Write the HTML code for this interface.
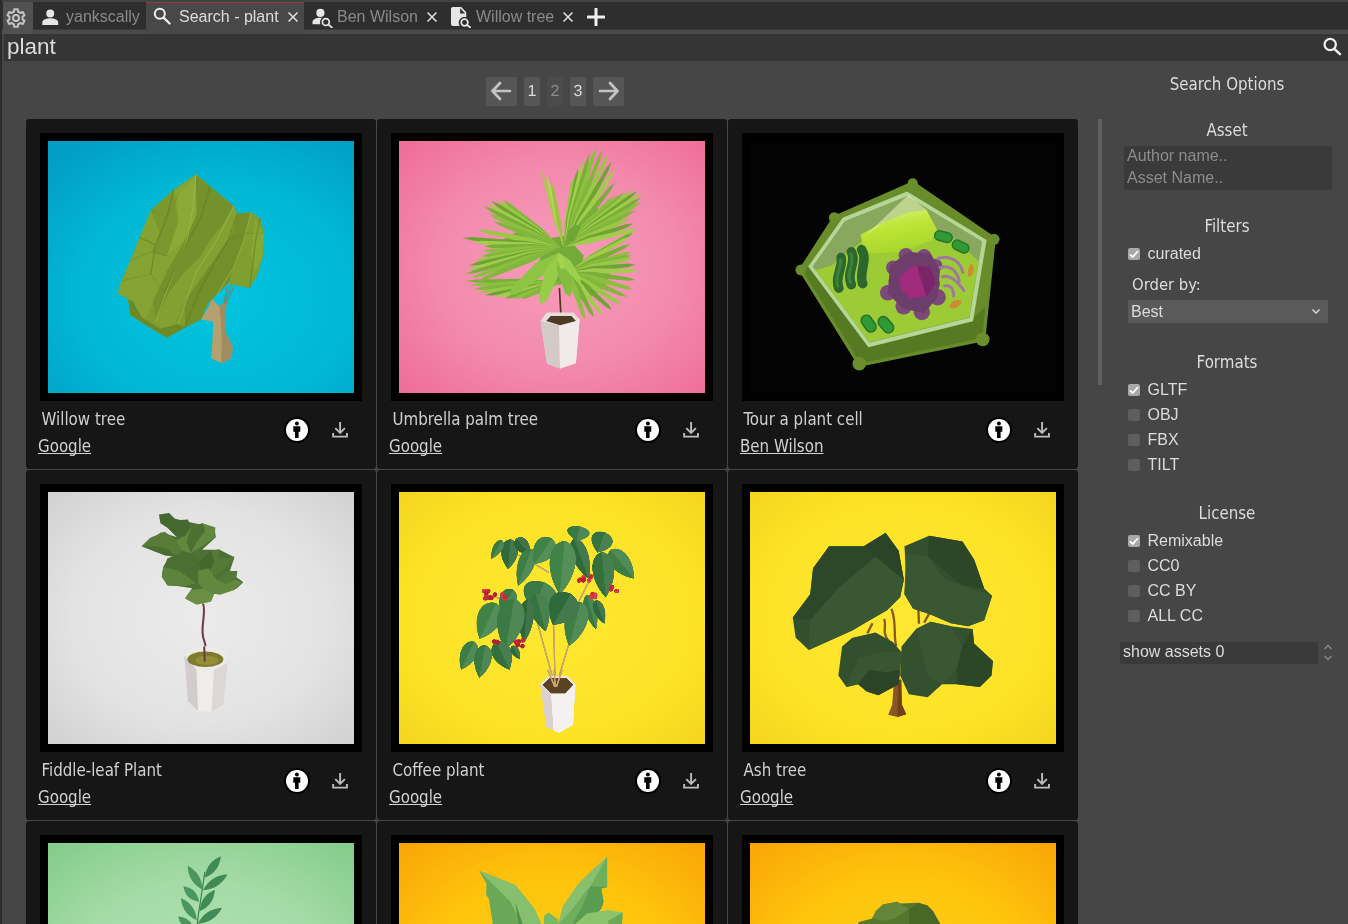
<!DOCTYPE html>
<html lang="en">
<head>
<meta charset="utf-8">
<title>Search - plant</title>
<style>
*{box-sizing:border-box;margin:0;padding:0}
html,body{width:1348px;height:924px;overflow:hidden;background:#464646;color:#dcdcdc;font-family:"Liberation Sans",sans-serif}
body{position:relative;will-change:transform}
.abs{position:absolute}
.os{font-family:"DejaVu Sans Condensed","DejaVu Sans",sans-serif}
#leftedge{left:0;top:0;width:1.5px;height:924px;background:#2c2c2c}
#topstrip{left:0;top:0;width:1348px;height:2px;background:#424242}
#tabbar{left:2px;top:2px;width:1346px;height:27px;background:#2e2e2e;border-bottom:1px solid #3a3a3a;box-sizing:content-box}
#strip{left:2px;top:30px;width:1346px;height:4px;background:#4a4a4a}
#gear{left:3px;top:2px;width:30px;height:31.5px;background:#515151}
.tab{top:2px;height:27px;font-size:16px;line-height:28px;color:#8a8a8a;white-space:nowrap}
.tab.active{background:#484848;color:#dcdcdc;border-top:1px solid #8c3c44}
.tab span{position:absolute;top:1px}
#searchbar{left:4px;top:34px;width:1344px;height:27px;background:#353535}
#searchbar .q{left:3px;top:0;font-size:22.5px;line-height:26px;color:#dcdcdc}
.card{width:350px;height:350px;background:#161616;border-radius:3px}
.frame{left:14px;top:14px;width:322px;height:268px;background:#000}
.frame svg{position:absolute;left:8px;top:8px;width:306px;height:252px;display:block}
.frame svg>g{filter:blur(.45px)}
.title{left:15.5px;top:290px;font-size:16.75px;line-height:20px;color:#d0d0d0;white-space:nowrap}
.author{left:12px;top:317px;font-size:16.75px;line-height:20px;color:#d2d2d2;text-decoration:underline;text-decoration-thickness:1px;text-underline-offset:.5px;text-decoration-skip-ink:none;white-space:nowrap}
.info{left:258px;top:298px;width:26px;height:26px}
.dl{left:304px;top:300px;width:20px;height:20px}
.pg{text-rendering:geometricPrecision;top:77px;height:29px;background:#565656;border-radius:2px;color:#dcdcdc;font-size:16px;line-height:29px;text-align:center}
.side-h{font-size:16.75px;line-height:20px;margin-top:1px;color:#dcdcdc;text-align:center;width:206px;left:1124px}
.cb{width:12px;height:12px;border-radius:2px;background:#5e5e5e;left:1127.5px}
.cb.on{background:#a8a8a8}
.cb svg{position:absolute;left:0;top:0;width:12px;height:12px}
.cbl{left:1147.5px;margin-top:1px;font-size:16px;line-height:20px;color:#dcdcdc;white-space:nowrap}
</style>
</head>
<body>
<div id="topstrip" class="abs"></div>
<div id="tabbar" class="abs"></div><div id="strip" class="abs"></div>
<div id="leftedge" class="abs"></div>
<div id="gear" class="abs"></div>

<svg class="abs" style="left:4px;top:6px" width="24" height="24" viewBox="0 0 24 24"><path fill="none" stroke="#c4c4c4" stroke-width="2" stroke-linejoin="round" d="M9.85 5.76 L10.21 3.18 L13.79 3.18 L14.15 5.76 L15.30 6.28 L16.33 7.02 L18.74 6.04 L20.53 9.14 L18.48 10.74 L18.60 12.00 L18.48 13.26 L20.53 14.86 L18.74 17.96 L16.33 16.98 L15.30 17.72 L14.15 18.24 L13.79 20.82 L10.21 20.82 L9.85 18.24 L8.70 17.72 L7.67 16.98 L5.26 17.96 L3.47 14.86 L5.52 13.26 L5.40 12.00 L5.52 10.74 L3.47 9.14 L5.26 6.04 L7.67 7.02 L8.70 6.28z"/><circle cx="12" cy="12" r="3" fill="none" stroke="#c4c4c4" stroke-width="2"/></svg>
<div class="tab abs" style="left:33px;width:113px;border-radius:0 0 3px 3px">
 <svg class="abs" style="left:9px;top:6.5px" width="16.5" height="16.5" viewBox="0 0 17 17"><circle cx="8.5" cy="4.6" r="4.1" fill="#e6e6e6"/><path fill="#e6e6e6" d="M0.3 16.5v-2.6c0-3 5-4.3 8.2-4.3s8.2 1.300 8.200 4.300v2.600z"/></svg>
 <span style="left:33px">yankscally</span>
</div>
<div class="tab active abs" style="left:146px;width:158px;height:32px">
 <svg class="abs" style="left:7.3px;top:4px" width="18" height="18" viewBox="0 0 19 19"><circle cx="7.200" cy="7.200" r="5.300" fill="none" stroke="#f0f0f0" stroke-width="2.100"/><path d="M11.200 11.200L17.500 17.500" stroke="#f0f0f0" stroke-width="2.300" stroke-linecap="round"/></svg>
 <span style="left:33px;top:0">Search - plant</span>
 <svg class="abs" style="left:142px;top:9px" width="10" height="10" viewBox="0 0 10 10"><path d="M0.500 0.500L9.500 9.500M9.500 0.500L0.500 9.500" stroke="#e0e0e0" stroke-width="1.500"/></svg>
</div>
<div class="tab abs" style="left:304px;width:139px">
 <svg class="abs" style="left:7.5px;top:6px" width="21" height="20" viewBox="0 0 22 21"><circle cx="8.800" cy="5.200" r="4.300" fill="#e6e6e6"/><path fill="#e6e6e6" d="M0.500 17v-2.500c0-2.800 4.500-4.300 8-4.300.6 0 1.300.1 2 .2-1.300 1.100-2.100 2.700-2.100 4.500 0 .7.100 1.400.4 2.100z"/><circle cx="14.500" cy="14.700" r="3.600" fill="none" stroke="#e6e6e6" stroke-width="1.800"/><path d="M17.200 17.400L20.800 20.400" stroke="#e6e6e6" stroke-width="1.900" stroke-linecap="round"/></svg>
 <span style="left:33px">Ben Wilson</span>
 <svg class="abs" style="left:123px;top:10px" width="10" height="10" viewBox="0 0 10 10"><path d="M0.500 0.500L9.500 9.500M9.500 0.500L0.500 9.500" stroke="#e0e0e0" stroke-width="1.500"/></svg>
</div>
<div class="tab abs" style="left:443px;width:137px">
 <svg class="abs" style="left:8px;top:5px" width="20" height="21" viewBox="0 0 21 22"><path fill="#e6e6e6" d="M2 0h8.800l5.200 5.600v5.200c-.6-.2-1.300-.3-2-.3-3.300 0-5.900 2.600-5.900 5.900 0 1.300.4 2.500 1.100 3.500H2c-1.100 0-2-.9-2-2V2C0 .9.900 0 2 0z"/><path fill="#2e2e2e" d="M9.600 1.300v5.500h5.200z"/><circle cx="14.200" cy="16.200" r="3.500" fill="none" stroke="#e6e6e6" stroke-width="1.800"/><path d="M16.900 18.900L20.200 21.500" stroke="#e6e6e6" stroke-width="1.900" stroke-linecap="round"/></svg>
 <span style="left:33px">Willow tree</span>
 <svg class="abs" style="left:120px;top:10px" width="10" height="10" viewBox="0 0 10 10"><path d="M0.500 0.500L9.500 9.500M9.500 0.500L0.500 9.500" stroke="#e0e0e0" stroke-width="1.500"/></svg>
</div>
<svg class="abs" style="left:587px;top:8px" width="18" height="18" viewBox="0 0 18 18"><path d="M9 1v16M1 9h16" stroke="#f0f0f0" stroke-width="3" stroke-linecap="round"/></svg>

<div id="searchbar" class="abs"><div class="q abs">plant</div></div>

<svg class="abs" style="left:1320px;top:34px" width="24" height="24" viewBox="0 0 24 24"><circle cx="10.200" cy="10.500" r="5.650" fill="none" stroke="#f0f0f0" stroke-width="2.200"/><path d="M14.300 14.800L20 20.200" stroke="#f0f0f0" stroke-width="2.400" stroke-linecap="round"/></svg>
<div class="pg abs" style="left:486px;width:31px"><svg class="abs" style="left:4px;top:3px" width="22" height="22" viewBox="0 0 22 22"><path d="M20 11H3M10 3L2.500 11L10 19" fill="none" stroke="#c4c4c4" stroke-width="2.700" stroke-linecap="round" stroke-linejoin="round"/></svg></div>
<div class="pg abs" style="left:524px;width:16px">1</div>
<div class="pg abs" style="left:547px;width:16px;background:#4b4b4b;color:#8c8c8c">2</div>
<div class="pg abs" style="left:570px;width:16px">3</div>
<div class="pg abs" style="left:593px;width:31px"><svg class="abs" style="left:5px;top:3px" width="22" height="22" viewBox="0 0 22 22"><path d="M2 11H19M12 3L19.500 11L12 19" fill="none" stroke="#c4c4c4" stroke-width="2.700" stroke-linecap="round" stroke-linejoin="round"/></svg></div>

<div class="card abs" style="left:26px;top:119px"><div class="frame abs"><svg viewBox="0 0 306 252" preserveAspectRatio="none"><defs><radialGradient id="bg0" cx="55%" cy="62%" r="75%"><stop offset="0" stop-color="#02c4de"/><stop offset="0.6" stop-color="#01b7d4"/><stop offset="1" stop-color="#019fc4"/></radialGradient></defs><rect width="306" height="252" fill="url(#bg0)"/><g transform="translate(62,24) scale(0.22727)"><path fill="#b5a070" d="M450,590 480,622 515,600 505,660 510,740 540,800 535,850 490,872 445,850 450,780 455,690 400,680 430,630z"/><path fill="#a08c5e" d="M480,622 515,600 505,660 510,740 540,800 535,850 490,872 492,760 488,680z"/><path d="M500,610 518,530M505,610 532,528M510,610 546,534" stroke="#8a7a50" stroke-width="4" fill="none"/><path fill="#7d9c2f" d="M378,42 440,95 545,180 560,215 620,208 660,235 678,300 672,400 650,480 615,540 560,530 520,520 470,570 430,610 400,680 330,715 250,760 150,700 90,660 80,590 35,565 50,510 90,420 130,320 180,200 280,110z"/><path fill="#84a333" d="M378,42 440,95 470,150 420,260 330,330 250,470 190,600 150,700 90,660 80,590 35,565 50,510 90,420 130,320 180,200 280,110z"/><path fill="#73922b" d="M378,42 440,95 545,180 500,260 440,330 400,400 330,470 260,560 200,690 190,600 250,470 330,330 380,220z"/><path fill="#8aaa38" d="M300,130 378,42 380,220 330,330 250,400 300,250z"/><path fill="#7a982e" d="M180,200 280,110 300,250 250,400 190,390 220,300z"/><path fill="#82a132" d="M545,180 560,215 540,300 470,400 400,500 330,600 250,760 200,690 260,560 330,470 400,400 440,330 500,260z"/><path fill="#71902a" d="M560,215 620,208 600,300 560,420 520,520 470,570 430,610 400,680 330,715 330,600 400,500 470,400 540,300z"/><path fill="#7f9f30" d="M620,208 660,235 678,300 672,400 650,480 615,540 560,530 520,520 560,420 600,300z"/><path fill="#88a836" d="M640,240 678,300 672,400 640,470 620,400 630,300z"/><path fill="#6b8a26" d="M35,565 80,590 90,660 150,700 250,760 330,715 300,700 220,720 140,670 100,600z"/><g fill="none" stroke-linecap="round" stroke-linejoin="round"><path d="M378,42 365,180 340,330 270,500 200,690M545,180 470,330 380,470 300,700M620,208 590,330 540,460 470,570" stroke="#a4c04c" stroke-width="5" opacity="0.55"/><path d="M440,95 400,230 330,360 240,560M560,215 520,330 450,450 390,560 330,715M280,110 250,230 190,380M130,320 200,350 180,480M660,235 640,340 615,540" stroke="#5c7a20" stroke-width="6" opacity="0.5"/><path d="M180,200 250,230 300,130M90,420 190,380 250,400M50,510 180,480 240,560M520,330 600,300 678,300" stroke="#678626" stroke-width="4" opacity="0.5"/></g></g></svg></div><div class="title os abs">Willow tree</div><div class="author os abs">Google</div><svg class="info abs" viewBox="0 0 26 26"><circle cx="13" cy="13" r="13" fill="#000"/><circle cx="13" cy="13" r="11" fill="#fff"/><circle cx="12.900" cy="6.500" r="1.950" fill="#000"/><path fill="#000" d="M9.300 9.200h7v5.600h-1.700v6.300h-3.600v-6.300H9.300z"/></svg><svg class="dl abs" viewBox="0 0 20 20"><path d="M10.100 2.900V13.400M5.300 9.200L10.100 14L14.900 9.200M3.150 14V17.650H16.950V14" fill="none" stroke="#bcbcbc" stroke-width="1.900"/></svg></div>
<div class="card abs" style="left:377px;top:119px"><div class="frame abs"><svg viewBox="0 0 306 252" preserveAspectRatio="none"><defs><radialGradient id="bg1" cx="52%" cy="50%" r="72%"><stop offset="0" stop-color="#f69cb9"/><stop offset="0.55" stop-color="#f38aad"/><stop offset="1" stop-color="#ee6c98"/></radialGradient></defs><rect width="306" height="252" fill="url(#bg1)"/><g transform="translate(51,-1) scale(0.2057)"><path fill="#74aa38" d="M470,480 560,465 650,560 625,690 520,705 430,600z"/><path fill="#86b93e" d="M540,690 264,687 274,699 285,711 302,720 318,729 346,734 375,738 399,739 423,739 z"/><path fill="#79ae38" d="M540,690 379,675 126,678 80,685 126,693 379,701 z"/><path fill="#8cbf40" d="M540,690 385,682 141,696 98,705 142,711 386,708 z"/><path fill="#82b63c" d="M540,690 390,689 157,714 115,725 158,729 392,715 z"/><path fill="#98c846" d="M540,690 399,695 181,727 142,740 183,743 402,720 z"/><path fill="#6fa434" d="M540,690 408,700 206,741 170,755 208,756 413,726 z"/><path fill="#a2cc4c" d="M540,690 424,703 248,748 218,762 251,763 430,728 z"/><path fill="#79ae38" d="M540,690 440,706 290,755 265,770 295,769 447,730 z"/><path fill="#8cbf40" d="M540,690 454,706 326,756 305,771 331,770 462,731 z"/><path fill="#82b63c" d="M540,690 467,707 361,757 345,772 368,771 477,731 z"/><path fill="#7db33a" d="M580,640 775,517 764,528 754,538 757,560 760,583 762,592 763,601 772,619 781,637 773,664 765,691 748,714 731,736 704,752 677,767 651,773 626,779 z"/><path fill="#98c846" d="M580,640 701,580 877,463 905,435 868,448 686,556 z"/><path fill="#6fa434" d="M580,640 695,586 861,478 888,452 852,464 680,562 z"/><path fill="#a2cc4c" d="M580,640 689,593 845,494 870,470 837,480 674,568 z"/><path fill="#79ae38" d="M580,640 689,606 849,528 875,508 842,513 678,581 z"/><path fill="#8cbf40" d="M580,640 689,620 853,563 880,545 847,546 681,593 z"/><path fill="#82b63c" d="M580,640 689,626 854,576 882,560 850,560 682,598 z"/><path fill="#98c846" d="M580,640 690,631 856,590 885,575 853,573 684,604 z"/><path fill="#6fa434" d="M580,640 694,642 869,617 900,605 867,600 690,614 z"/><path fill="#a2cc4c" d="M580,640 697,652 882,644 915,635 881,627 697,624 z"/><path fill="#79ae38" d="M580,640 691,668 868,684 902,680 870,668 694,640 z"/><path fill="#8cbf40" d="M580,640 684,683 855,725 888,725 859,708 692,656 z"/><path fill="#82b63c" d="M580,640 672,696 829,758 860,762 835,743 684,670 z"/><path fill="#98c846" d="M580,640 661,708 802,791 832,800 811,777 676,684 z"/><path fill="#6fa434" d="M580,640 643,716 761,814 787,826 772,801 662,695 z"/><path fill="#a2cc4c" d="M580,640 626,723 719,836 742,852 732,826 648,706 z"/><path fill="#79ae38" d="M580,640 609,724 680,844 699,862 695,836 634,711 z"/><path fill="#8cbf40" d="M580,640 593,726 640,851 656,872 656,846 620,717 z"/><path fill="#78ae38" d="M535,520 363,377 345,379 327,381 316,389 306,397 320,420 334,443 287,468 240,493 273,505 306,518 301,533 296,548 278,562 259,576 255,589 250,602 267,614 284,625 z"/><path fill="#82b63c" d="M535,520 447,429 291,307 258,290 280,319 429,450 z"/><path fill="#98c846" d="M535,520 436,429 265,309 229,293 255,322 420,452 z"/><path fill="#6fa434" d="M535,520 426,430 238,311 200,296 229,325 410,453 z"/><path fill="#a2cc4c" d="M535,520 419,434 222,323 182,309 213,337 404,458 z"/><path fill="#79ae38" d="M535,520 412,438 206,334 165,322 198,349 399,463 z"/><path fill="#8cbf40" d="M535,520 419,451 226,367 188,359 219,383 407,476 z"/><path fill="#82b63c" d="M535,520 426,464 245,401 210,396 240,416 416,490 z"/><path fill="#98c846" d="M535,520 398,477 177,436 135,436 173,453 392,504 z"/><path fill="#6fa434" d="M535,520 370,491 108,472 60,476 107,489 367,519 z"/><path fill="#a2cc4c" d="M535,520 388,498 155,490 112,496 154,507 386,526 z"/><path fill="#79ae38" d="M535,520 406,505 202,508 165,516 202,525 405,533 z"/><path fill="#8cbf40" d="M535,520 402,513 195,530 158,540 196,547 404,541 z"/><path fill="#82b63c" d="M535,520 399,522 188,552 150,565 189,569 402,550 z"/><path fill="#98c846" d="M535,520 388,530 160,572 120,588 163,589 392,557 z"/><path fill="#6fa434" d="M535,520 376,538 133,593 90,610 136,609 382,565 z"/><path fill="#a2cc4c" d="M535,520 373,545 126,612 83,631 130,628 380,572 z"/><path fill="#79ae38" d="M535,520 370,553 120,631 76,652 124,647 378,580 z"/><path fill="#8cbf40" d="M535,520 379,560 143,648 103,671 149,664 388,586 z"/><path fill="#82b63c" d="M535,520 388,567 167,665 130,690 174,681 399,592 z"/><path fill="#6aa236" d="M555,520 585,296 600,269 614,243 637,220 659,197 678,208 697,220 707,245 718,269 718,312 718,355 747,345 776,335 789,340 802,346 803,360 804,375 785,401 767,428 776,445 786,462 z"/><path fill="#98c846" d="M555,520 585,403 604,215 600,180 587,213 557,399 z"/><path fill="#6fa434" d="M555,520 592,389 624,179 622,140 607,177 565,385 z"/><path fill="#a2cc4c" d="M555,520 600,376 644,144 645,100 628,140 573,370 z"/><path fill="#79ae38" d="M555,520 612,364 674,113 678,65 658,108 585,357 z"/><path fill="#8cbf40" d="M555,520 623,353 704,82 712,30 688,76 597,344 z"/><path fill="#82b63c" d="M555,520 633,360 730,98 741,48 715,92 607,350 z"/><path fill="#98c846" d="M555,520 643,367 756,115 770,66 741,108 618,355 z"/><path fill="#6fa434" d="M555,520 648,381 770,149 786,103 756,141 624,367 z"/><path fill="#a2cc4c" d="M555,520 653,395 784,183 802,140 770,173 630,379 z"/><path fill="#79ae38" d="M555,520 652,418 784,242 802,205 771,231 630,401 z"/><path fill="#8cbf40" d="M555,520 651,442 783,301 802,270 771,289 631,423 z"/><path fill="#82b63c" d="M555,520 666,438 823,288 846,255 811,275 647,417 z"/><path fill="#98c846" d="M555,520 681,433 862,274 890,240 851,262 663,411 z"/><path fill="#6fa434" d="M555,520 688,436 880,282 910,248 869,269 671,414 z"/><path fill="#a2cc4c" d="M555,520 694,439 897,289 930,256 888,276 678,416 z"/><path fill="#79ae38" d="M555,520 694,447 898,309 931,278 889,295 679,424 z"/><path fill="#8cbf40" d="M555,520 694,455 899,329 932,300 890,315 680,431 z"/><path fill="#82b63c" d="M555,520 684,469 873,365 904,340 865,351 671,445 z"/><path fill="#98c846" d="M555,520 673,484 847,402 876,380 841,386 662,458 z"/><path fill="#6fa434" d="M555,520 677,493 860,425 890,406 854,409 668,467 z"/><path fill="#a2cc4c" d="M555,520 681,503 872,449 905,432 868,433 674,476 z"/><path fill="#a9c94a" d="M552,520 525,388 462,185 446,150 451,189 505,393 z"/><path fill="#b6d456" d="M552,520 533,395 484,204 470,170 472,206 514,400 z"/><path fill="#9fc244" d="M552,520 541,405 504,227 492,196 492,229 521,408 z"/><path fill="#8cc444" d="M530,548 423,593 300,716 290,752 328,748 469,646 z"/><path fill="#96cc48" d="M530,548 466,624 431,766 442,798 471,780 532,647 z"/><path fill="#84bc40" d="M530,548 519,630 559,745 582,762 594,736 577,616 z"/><path fill="#9ad04c" d="M530,548 549,612 615,687 636,694 636,672 585,586 z"/><path fill="#a6d452" d="M530,548 522,580 537,624 548,630 555,620 551,573 z"/><path fill="#6fa636" d="M555,520 575,440 610,410 635,425 605,490z"/><path d="M532,720 540,870" stroke="#50301e" stroke-width="8"/><path fill="#e6dedb" d="M440,880 470,838 600,838 630,872 612,1085 535,1111 472,1088z"/><path fill="#d3c9c6" d="M440,880 530,902 535,1111 472,1088z"/><path fill="#f0eae8" d="M530,902 630,872 612,1085 535,1111z"/><path fill="#4c3a24" d="M468,880 490,856 590,856 612,880 535,900z"/></g></svg></div><div class="title os abs">Umbrella palm tree</div><div class="author os abs">Google</div><svg class="info abs" viewBox="0 0 26 26"><circle cx="13" cy="13" r="13" fill="#000"/><circle cx="13" cy="13" r="11" fill="#fff"/><circle cx="12.900" cy="6.500" r="1.950" fill="#000"/><path fill="#000" d="M9.300 9.200h7v5.600h-1.700v6.300h-3.600v-6.300H9.300z"/></svg><svg class="dl abs" viewBox="0 0 20 20"><path d="M10.100 2.900V13.400M5.300 9.200L10.100 14L14.900 9.200M3.150 14V17.650H16.950V14" fill="none" stroke="#bcbcbc" stroke-width="1.900"/></svg></div>
<div class="card abs" style="left:728px;top:119px"><div class="frame abs"><svg viewBox="0 0 306 252" preserveAspectRatio="none"><defs><linearGradient id="vac" x1="0" y1="0" x2="0.3" y2="1"><stop offset="0" stop-color="#d8f28a"/><stop offset="0.45" stop-color="#bfe638"/><stop offset="1" stop-color="#a8d82c"/></linearGradient></defs><rect width="306" height="252" fill="#030303"/><g transform="translate(40,29) scale(0.22727)"><path fill="#688c2a" stroke="#688c2a" stroke-width="30" stroke-linejoin="round" d="M540,65 890,305 845,740 310,850 55,440 200,215z"/><path fill="#567a22" d="M55,440 310,850 845,740 860,600 800,660 345,775 85,425z"/><g fill="#6a8e2b"><circle cx="540" cy="58" r="22"/><circle cx="898" cy="305" r="24"/><circle cx="848" cy="745" r="30"/><circle cx="305" cy="852" r="30"/><circle cx="48" cy="440" r="24"/><circle cx="195" cy="210" r="24"/></g><path fill="#b4d696" d="M515,95 865,308 805,665 345,780 80,425 232,210z"/><path fill="#82a24a" d="M515,115 845,315 790,650 350,760 100,425 242,225z"/><path fill="#9ccb35" d="M180,420 330,300 520,330 700,280 830,400 788,648 350,758 112,440z"/><path fill="#8aa860" opacity="0.9" d="M242,225 515,115 845,315 830,400 760,330 650,260 520,190 330,290 180,420 112,440 100,425z"/><path fill="url(#vac)" d="M310,285 420,225 520,185 600,175 650,268 622,310 480,362 350,366 322,335z"/><path fill="#e6f7b0" opacity="0.55" d="M330,290 520,110 600,175 520,185 420,225z"/><g fill="none" stroke="#2c672d" stroke-width="42" stroke-linecap="round"><path d="M215,520 C195,470 235,430 225,385"/><path d="M270,505 C245,450 295,410 270,360"/><path d="M320,500 C300,450 345,400 315,350"/></g><g fill="none" stroke="#3d8238" stroke-width="14" stroke-linecap="round"><path d="M210,510 C192,465 230,430 222,395"/><path d="M266,495 C243,448 290,410 268,370"/></g><g fill="#7b4a78"><circle cx="430" cy="540" r="34"/><circle cx="500" cy="600" r="36"/><circle cx="580" cy="625" r="36"/><circle cx="650" cy="560" r="36"/><circle cx="455" cy="430" r="32"/><circle cx="510" cy="375" r="32"/><circle cx="590" cy="380" r="32"/><circle cx="640" cy="420" r="30"/><circle cx="470" cy="490" r="36"/><circle cx="620" cy="500" r="40"/></g><path fill="#6d3d6c" d="M440,420 520,360 620,370 660,440 650,560 590,630 500,610 430,545z"/><g fill="none" stroke="#a276a4" stroke-width="13" stroke-linecap="round"><path d="M650,390 C700,370 750,400 760,450"/><path d="M660,430 C700,415 735,440 745,490"/><path d="M670,470 C700,460 730,480 765,530"/><path d="M680,510 C705,505 720,520 720,555"/></g><path fill="#a02a7c" d="M480,470 540,420 620,430 640,500 600,555 530,565 490,530z"/><path fill="#7c2468" d="M560,420 620,430 640,500 600,555 575,480z"/><g fill="#2f9a34" stroke="#27752b" stroke-width="7"><rect x="636" y="272" width="78" height="42" rx="21" transform="rotate(15 675 293)"/><rect x="713" y="316" width="76" height="42" rx="21" transform="rotate(25 751 337)"/><rect x="306" y="653" width="80" height="46" rx="23" transform="rotate(55 346 676)"/><rect x="382" y="658" width="80" height="46" rx="23" transform="rotate(50 422 681)"/></g><ellipse cx="795" cy="442" rx="12" ry="28" fill="#cf8a34" transform="rotate(12 795 442)"/><ellipse cx="728" cy="590" rx="28" ry="15" fill="#cf8a34" transform="rotate(-25 728 590)"/></g></svg></div><div class="title os abs">Tour a plant cell</div><div class="author os abs">Ben Wilson</div><svg class="info abs" viewBox="0 0 26 26"><circle cx="13" cy="13" r="13" fill="#000"/><circle cx="13" cy="13" r="11" fill="#fff"/><circle cx="12.900" cy="6.500" r="1.950" fill="#000"/><path fill="#000" d="M9.300 9.200h7v5.600h-1.700v6.300h-3.600v-6.300H9.300z"/></svg><svg class="dl abs" viewBox="0 0 20 20"><path d="M10.100 2.900V13.400M5.300 9.200L10.100 14L14.900 9.200M3.150 14V17.650H16.950V14" fill="none" stroke="#bcbcbc" stroke-width="1.900"/></svg></div>
<div class="card abs" style="left:26px;top:470px"><div class="frame abs"><svg viewBox="0 0 306 252" preserveAspectRatio="none"><defs><radialGradient id="bg3" cx="50%" cy="50%" r="75%"><stop offset="0" stop-color="#ebebeb"/><stop offset="0.55" stop-color="#e3e3e3"/><stop offset="1" stop-color="#cecece"/></radialGradient></defs><rect width="306" height="252" fill="url(#bg3)"/><g transform="translate(72,8) scale(0.2488)"><path fill="#4d7034" d="M160,60 285,90 380,110 385,150 330,200 400,200 460,230 440,290 495,330 470,355 370,380 360,410 300,415 262,395 290,355 190,340 168,300 190,235 240,215 90,185 165,130 230,150z"/></g><g transform="translate(-8,-8) scale(0.2901)"><path d="M562,412 C575,450 548,500 566,540 C578,570 566,590 568,615" stroke="#6b3b44" stroke-width="7" fill="none"/><path fill="#e4dfdd" d="M498,592 524,562 600,558 642,580 646,616 632,760 592,786 545,782 510,750z"/><path fill="#d2ccca" d="M498,592 510,750 545,782 540,640z"/><path fill="#f0ecea" d="M540,640 545,782 592,786 600,640z"/><path fill="#dcd6d4" d="M600,640 592,786 632,760 646,616z"/><path fill="#eeeae8" d="M498,592 524,562 600,558 642,580 646,616 600,640 540,640z"/><ellipse cx="570" cy="604" rx="62" ry="27" fill="#807c2e"/><ellipse cx="575" cy="608" rx="40" ry="16" fill="#938e38"/><path d="M566,560 568,612" stroke="#6b3b44" stroke-width="7"/><path fill="#4a6e32" d="M470,180 520,235 545,270 545,300 520,260 470,250 490,230z"/><path fill="#44692f" d="M410,105 445,100 470,125 510,122 520,150 500,178 470,182 440,152 415,135z"/><path fill="#587c38" d="M350,215 380,185 430,165 470,195 490,230 470,252 430,246 390,230z"/><path fill="#4a6e32" d="M350,215 390,230 430,246 470,252 440,225 400,215z"/><path fill="#62873e" d="M520,150 560,135 605,150 600,185 560,215 520,238 490,230 470,195 500,178z"/><path fill="#4c7033" d="M520,150 560,135 570,160 540,200 520,238 505,200z"/><path fill="#4a6f31" d="M440,260 470,245 520,260 545,300 540,342 500,352 440,350 420,320 425,285z"/><path fill="#5d823b" d="M425,285 480,300 540,342 500,352 440,350 420,320z"/><path fill="#557a36" d="M545,270 590,230 620,225 615,260 670,250 640,290 610,312 560,312z"/><path fill="#43682e" d="M545,270 590,230 600,270 580,312 560,312z"/><path fill="#62873e" d="M545,300 580,290 610,330 650,300 680,300 675,330 700,340 670,365 620,382 570,372 545,340z"/><path fill="#547936" d="M610,330 650,300 680,300 675,330 640,345z"/><path fill="#6a8e43" d="M500,395 520,365 570,360 600,380 590,405 540,416z"/></g></svg></div><div class="title os abs">Fiddle-leaf Plant</div><div class="author os abs">Google</div><svg class="info abs" viewBox="0 0 26 26"><circle cx="13" cy="13" r="13" fill="#000"/><circle cx="13" cy="13" r="11" fill="#fff"/><circle cx="12.900" cy="6.500" r="1.950" fill="#000"/><path fill="#000" d="M9.300 9.200h7v5.600h-1.700v6.300h-3.600v-6.300H9.300z"/></svg><svg class="dl abs" viewBox="0 0 20 20"><path d="M10.100 2.900V13.400M5.300 9.200L10.100 14L14.900 9.200M3.150 14V17.650H16.950V14" fill="none" stroke="#bcbcbc" stroke-width="1.900"/></svg></div>
<div class="card abs" style="left:377px;top:470px"><div class="frame abs"><svg viewBox="0 0 306 252" preserveAspectRatio="none"><defs><radialGradient id="bg4" cx="50%" cy="50%" r="75%"><stop offset="0" stop-color="#ffe832"/><stop offset="0.6" stop-color="#fde326"/><stop offset="1" stop-color="#f3d31a"/></radialGradient></defs><rect width="306" height="252" fill="url(#bg4)"/><g transform="translate(-8,-8) scale(0.2901)"><path d="M565,695 505,480M566,695 560,470M570,695 615,545 650,400 690,320M545,305 440,245M400,400 340,385M420,520 440,548" stroke="#c9a468" stroke-width="6" fill="none"/><g transform="translate(408 240) rotate(5)"><path fill="#2f6b3a" d="M0,-50 C40,-42 40,12 0,54 C-40,12 -40,-42 0,-50z"/><path fill="#43794d" d="M0,-50 C40,-42 40,12 0,54z"/></g><g transform="translate(365 225) rotate(30)"><path fill="#3a7a42" d="M0,-36 C22,-31 22,9 0,39 C-22,9 -22,-31 0,-36z"/><path fill="#4d8754" d="M0,-36 C22,-31 22,9 0,39z"/></g><g transform="translate(455 215) rotate(-40)"><path fill="#2c6536" d="M0,-36 C31,-31 31,9 0,39 C-31,9 -31,-31 0,-36z"/><path fill="#41744a" d="M0,-36 C31,-31 31,9 0,39z"/></g><g transform="translate(462 285) rotate(20)"><path fill="#3f7f45" d="M0,-66 C38,-56 38,16 0,71 C-38,16 -38,-56 0,-66z"/><path fill="#528b57" d="M0,-66 C38,-56 38,16 0,71z"/></g><g transform="translate(525 230) rotate(35)"><path fill="#418246" d="M0,-52 C50,-44 50,13 0,56 C-50,13 -50,-44 0,-52z"/><path fill="#548e58" d="M0,-52 C50,-44 50,13 0,56z"/></g><g transform="translate(655 255) rotate(-20)"><path fill="#2f6b3a" d="M0,-72 C38,-61 38,18 0,78 C-38,18 -38,-61 0,-72z"/><path fill="#43794d" d="M0,-72 C38,-61 38,18 0,78z"/></g><g transform="translate(645 170) rotate(10)"><path fill="#3a7a42" d="M0,-25 C52,-21 52,6 0,27 C-52,6 -52,-21 0,-25z"/><path fill="#4d8754" d="M0,-25 C52,-21 52,6 0,27z"/></g><g transform="translate(725 200) rotate(20)"><path fill="#35733e" d="M0,-36 C50,-31 50,9 0,39 C-50,9 -50,-31 0,-36z"/><path fill="#498151" d="M0,-36 C50,-31 50,9 0,39z"/></g><g transform="translate(795 275) rotate(-40)"><path fill="#3d7d44" d="M0,-62 C44,-53 44,16 0,67 C-44,16 -44,-53 0,-62z"/><path fill="#508a56" d="M0,-62 C44,-53 44,16 0,67z"/></g><g transform="translate(733 310) rotate(-5)"><path fill="#33703c" d="M0,-76 C50,-65 50,19 0,82 C-50,19 -50,-65 0,-76z"/><path fill="#477e4f" d="M0,-76 C50,-65 50,19 0,82z"/></g><g transform="translate(590 285) rotate(5)"><path fill="#418246" d="M0,-90 C60,-76 60,22 0,97 C-60,22 -60,-76 0,-90z"/><path fill="#548e58" d="M0,-90 C60,-76 60,22 0,97z"/></g><g transform="translate(690 440) rotate(-15)"><path fill="#3a7a42" d="M0,-60 C28,-51 28,15 0,65 C-28,15 -28,-51 0,-60z"/><path fill="#4d8754" d="M0,-60 C28,-51 28,15 0,65z"/></g><g transform="translate(720 440) rotate(-20)"><path fill="#2f6b3a" d="M0,-42 C25,-36 25,10 0,45 C-25,10 -25,-36 0,-42z"/><path fill="#43794d" d="M0,-42 C25,-36 25,10 0,45z"/></g><g transform="translate(510 385) rotate(20)"><path fill="#3a7a42" d="M0,-50 C78,-42 78,12 0,54 C-78,12 -78,-42 0,-50z"/><path fill="#4d8754" d="M0,-50 C78,-42 78,12 0,54z"/></g><g transform="translate(635 480) rotate(15)"><path fill="#3f7f45" d="M0,-76 C52,-65 52,19 0,82 C-52,19 -52,-65 0,-76z"/><path fill="#528b57" d="M0,-76 C52,-65 52,19 0,82z"/></g><g transform="translate(590 430) rotate(30)"><path fill="#2f6b3a" d="M0,-60 C70,-51 70,15 0,65 C-70,15 -70,-51 0,-60z"/><path fill="#43794d" d="M0,-60 C70,-51 70,15 0,65z"/></g><g transform="translate(515 440) rotate(-15)"><path fill="#35733e" d="M0,-66 C44,-56 44,16 0,71 C-44,16 -44,-56 0,-66z"/><path fill="#498151" d="M0,-66 C44,-56 44,16 0,71z"/></g><g transform="translate(400 400) rotate(30)"><path fill="#3a7a42" d="M0,-42 C38,-36 38,10 0,45 C-38,10 -38,-36 0,-42z"/><path fill="#4d8754" d="M0,-42 C38,-36 38,10 0,45z"/></g><g transform="translate(335 470) rotate(25)"><path fill="#418246" d="M0,-66 C56,-56 56,16 0,71 C-56,16 -56,-56 0,-66z"/><path fill="#548e58" d="M0,-66 C56,-56 56,16 0,71z"/></g><g transform="translate(465 470) rotate(5)"><path fill="#2c6536" d="M0,-72 C35,-61 35,18 0,78 C-35,18 -35,-61 0,-72z"/><path fill="#41744a" d="M0,-72 C35,-61 35,18 0,78z"/></g><g transform="translate(410 480) rotate(10)"><path fill="#3b7b43" d="M0,-86 C62,-73 62,22 0,93 C-62,22 -62,-73 0,-86z"/><path fill="#4e8855" d="M0,-86 C62,-73 62,22 0,93z"/></g><g transform="translate(265 590) rotate(25)"><path fill="#3d7d44" d="M0,-52 C38,-44 38,13 0,56 C-38,13 -38,-44 0,-52z"/><path fill="#508a56" d="M0,-52 C38,-44 38,13 0,56z"/></g><g transform="translate(385 590) rotate(-25)"><path fill="#33703c" d="M0,-52 C44,-44 44,13 0,56 C-44,13 -44,-44 0,-52z"/><path fill="#477e4f" d="M0,-52 C44,-44 44,13 0,56z"/></g><g transform="translate(315 610) rotate(10)"><path fill="#3a7a42" d="M0,-56 C40,-48 40,14 0,60 C-40,14 -40,-48 0,-56z"/><path fill="#4d8754" d="M0,-56 C40,-48 40,14 0,60z"/></g><g transform="translate(430 580) rotate(-30)"><path fill="#2f6b3a" d="M0,-26 C19,-22 19,6 0,28 C-19,6 -19,-22 0,-26z"/><path fill="#43794d" d="M0,-26 C19,-22 19,6 0,28z"/></g><circle cx="328" cy="383" r="8" fill="#d83848"/><circle cx="358" cy="381" r="8" fill="#b02030"/><circle cx="321" cy="369" r="8" fill="#d83848"/><circle cx="329" cy="375" r="8" fill="#b02030"/><circle cx="339" cy="391" r="8" fill="#d83848"/><circle cx="335" cy="392" r="8" fill="#c8283a"/><circle cx="346" cy="392" r="8" fill="#b02030"/><circle cx="335" cy="369" r="8" fill="#c8283a"/><circle cx="325" cy="394" r="8" fill="#c8283a"/><circle cx="383" cy="381" r="8" fill="#d83848"/><circle cx="387" cy="391" r="8" fill="#d83848"/><circle cx="393" cy="394" r="8" fill="#d83848"/><circle cx="393" cy="389" r="8" fill="#c8283a"/><circle cx="454" cy="539" r="8" fill="#c8283a"/><circle cx="440" cy="543" r="8" fill="#b02030"/><circle cx="438" cy="551" r="8" fill="#d83848"/><circle cx="437" cy="555" r="8" fill="#b02030"/><circle cx="435" cy="550" r="8" fill="#b02030"/><circle cx="430" cy="544" r="8" fill="#c8283a"/><circle cx="453" cy="559" r="8" fill="#b02030"/><circle cx="365" cy="544" r="8" fill="#d83848"/><circle cx="369" cy="546" r="8" fill="#b02030"/><circle cx="356" cy="543" r="8" fill="#b02030"/><circle cx="683" cy="332" r="8" fill="#d83848"/><circle cx="651" cy="330" r="8" fill="#b02030"/><circle cx="690" cy="319" r="8" fill="#c8283a"/><circle cx="664" cy="321" r="8" fill="#d83848"/><circle cx="665" cy="328" r="8" fill="#c8283a"/><circle cx="648" cy="333" r="8" fill="#c8283a"/><circle cx="663" cy="332" r="8" fill="#b02030"/><circle cx="777" cy="369" r="8" fill="#b02030"/><circle cx="762" cy="355" r="8" fill="#c8283a"/><circle cx="758" cy="363" r="8" fill="#c8283a"/><circle cx="779" cy="369" r="8" fill="#d83848"/><circle cx="695" cy="379" r="8" fill="#c8283a"/><circle cx="704" cy="382" r="8" fill="#d83848"/><circle cx="703" cy="390" r="8" fill="#d83848"/><circle cx="689" cy="389" r="8" fill="#d83848"/><path fill="#ebe5e3" d="M514,690 545,660 610,662 636,690 628,830 580,858 535,838z"/><path fill="#d8d1cf" d="M514,690 535,838 560,850 552,725z"/><path fill="#f5f1f0" d="M552,725 560,850 580,858 628,830 636,690 600,725z"/><path fill="#5b4224" d="M522,692 548,668 606,670 628,692 600,722 552,722z"/><path d="M565,700 540,640M566,700 562,640M570,700 590,640" stroke="#c9a468" stroke-width="6" fill="none"/></g></svg></div><div class="title os abs">Coffee plant</div><div class="author os abs">Google</div><svg class="info abs" viewBox="0 0 26 26"><circle cx="13" cy="13" r="13" fill="#000"/><circle cx="13" cy="13" r="11" fill="#fff"/><circle cx="12.900" cy="6.500" r="1.950" fill="#000"/><path fill="#000" d="M9.300 9.200h7v5.600h-1.700v6.300h-3.600v-6.300H9.300z"/></svg><svg class="dl abs" viewBox="0 0 20 20"><path d="M10.100 2.900V13.400M5.300 9.200L10.100 14L14.900 9.200M3.150 14V17.650H16.950V14" fill="none" stroke="#bcbcbc" stroke-width="1.900"/></svg></div>
<div class="card abs" style="left:728px;top:470px"><div class="frame abs"><svg viewBox="0 0 306 252" preserveAspectRatio="none"><defs><radialGradient id="bg5" cx="50%" cy="50%" r="75%"><stop offset="0" stop-color="#ffe832"/><stop offset="0.6" stop-color="#fde326"/><stop offset="1" stop-color="#f3d31a"/></radialGradient></defs><rect width="306" height="252" fill="url(#bg5)"/><g transform="translate(-8,-8) scale(0.2901)"><path d="M532,560 C520,520 535,480 515,430M505,540 C480,510 500,490 490,465M432,515 450,480M610,482 608,430M628,478 646,445" stroke="#8a5a22" stroke-width="8" fill="none"/><path fill="#8a5424" d="M524,675 549,675 551,760 566,794 536,803 504,795 518,760z"/><path fill="#6f421a" d="M538,675 549,675 551,760 566,794 536,803z"/><path fill="#33502e" d="M300,215 420,215 495,168 540,230 558,330 545,390 500,435 440,470 380,505 230,572 185,530 175,460 235,380 245,290z"/><path fill="#395733" d="M460,250 558,330 545,390 500,435 440,470 380,505 230,572 235,470 330,360z"/><path fill="#2d4729" d="M300,215 420,215 460,250 330,360 235,470 175,460 235,380 245,290z"/><path fill="#2b4427" d="M420,215 495,168 540,230 558,330 460,250z"/><path fill="#33502e" d="M560,215 645,178 760,198 800,260 835,360 862,385 835,470 780,490 720,480 650,450 590,430 560,380 565,300z"/><path fill="#395733" d="M565,240 640,250 700,330 835,375 862,385 835,470 780,490 720,480 650,450 590,430 560,380z"/><path fill="#2c4628" d="M645,178 760,198 800,260 835,360 760,350 700,300 640,250z"/><path fill="#33502e" d="M345,560 380,530 460,512 520,545 550,580 545,640 540,690 470,728 430,715 400,690 360,700 332,660z"/><path fill="#385632" d="M400,600 480,580 550,580 545,640 500,650 440,640 400,690 360,700z"/><path fill="#2b4427" d="M400,690 440,640 500,650 545,640 540,690 470,728 430,715z"/><path fill="#34512f" d="M550,560 600,500 650,475 720,490 795,500 800,550 865,610 860,660 820,700 740,690 690,690 640,735 575,725 545,660z"/><path fill="#395733" d="M600,500 650,475 720,490 760,560 740,640 690,690 640,660 620,580z"/><path fill="#2c4628" d="M795,500 800,550 865,610 860,660 820,700 740,690 740,640 760,560z"/></g></svg></div><div class="title os abs">Ash tree</div><div class="author os abs">Google</div><svg class="info abs" viewBox="0 0 26 26"><circle cx="13" cy="13" r="13" fill="#000"/><circle cx="13" cy="13" r="11" fill="#fff"/><circle cx="12.900" cy="6.500" r="1.950" fill="#000"/><path fill="#000" d="M9.300 9.200h7v5.600h-1.700v6.300h-3.600v-6.300H9.300z"/></svg><svg class="dl abs" viewBox="0 0 20 20"><path d="M10.100 2.900V13.400M5.300 9.200L10.100 14L14.900 9.200M3.150 14V17.650H16.950V14" fill="none" stroke="#bcbcbc" stroke-width="1.900"/></svg></div>
<div class="card abs" style="left:26px;top:821px"><div class="frame abs"><svg viewBox="0 0 306 252" preserveAspectRatio="none"><defs><radialGradient id="bg6" cx="50%" cy="60%" r="75%"><stop offset="0" stop-color="#b4e2b4"/><stop offset="0.6" stop-color="#a4dba6"/><stop offset="1" stop-color="#86cd8c"/></radialGradient></defs><rect width="306" height="252" fill="url(#bg6)"/><g transform="translate(-8,-13) scale(0.2389)"><path d="M690,175 676,270 662,360 650,470 640,600" stroke="#3a8450" stroke-width="5" fill="none"/><path fill="#3f8a55" d="M690,200 Q751,175 757,110 Q696,135 690,200z"/><path fill="#4a9660" d="M680,250 Q678,182 618,150 Q620,218 680,250z"/><path fill="#3f8a55" d="M682,252 Q752,247 785,185 Q715,190 682,252z"/><path fill="#4a9660" d="M666,300 Q657,243 600,235 Q609,292 666,300z"/><path fill="#3f8a55" d="M668,340 Q728,315 732,250 Q672,275 668,340z"/><path fill="#4a9660" d="M656,378 Q651,312 590,285 Q595,351 656,378z"/><path fill="#3f8a55" d="M660,392 Q730,387 762,325 Q692,330 660,392z"/><path fill="#4a9660" d="M645,420 Q634,365 578,362 Q589,417 645,420z"/><path fill="#3f8a55" d="M650,450 Q712,455 740,400 Q678,395 650,450z"/><path fill="#4a9660" d="M640,480 Q625,427 570,430 Q585,483 640,480z"/><path fill="#3f8a55" d="M642,520 Q703,525 730,470 Q669,465 642,520z"/><path fill="#4a9660" d="M636,560 Q619,503 560,500 Q577,557 636,560z"/></g></svg></div></div>
<div class="card abs" style="left:377px;top:821px"><div class="frame abs"><svg viewBox="0 0 306 252" preserveAspectRatio="none"><defs><radialGradient id="bg7" cx="50%" cy="55%" r="75%"><stop offset="0" stop-color="#ffd018"/><stop offset="0.55" stop-color="#fec40c"/><stop offset="1" stop-color="#f9a406"/></radialGradient></defs><rect width="306" height="252" fill="url(#bg7)"/><g transform="translate(-8,-13) scale(0.2389)"><path fill="#6aa858" d="M370,172 520,230 600,330 660,460 640,700 520,700 430,420 410,290 398,270 400,225z"/><path fill="#86bf6e" d="M370,172 520,230 600,330 660,460 640,600 560,420 500,300z"/><path fill="#4f9148" d="M520,300 560,420 640,600 640,700 580,700z"/><path fill="#7ab864" d="M640,360 660,345 700,375 720,500 640,500z"/><path fill="#6fae5c" d="M905,112 905,240 880,245 890,300 880,330 800,420 700,700 660,600 700,394 720,320 780,230 830,180z"/><path fill="#88c070" d="M905,112 830,180 780,230 720,320 700,394 760,330 820,250 835,235z"/><path fill="#5a9c50" d="M835,235 905,240 880,245 890,300 880,330 800,420 760,394 800,320z"/><path fill="#8cc46e" d="M820,350 910,335 970,345 965,420 800,600 720,600 770,394z"/><path fill="#6aa858" d="M970,345 965,420 900,480 910,380z"/></g></svg></div></div>
<div class="card abs" style="left:728px;top:821px"><div class="frame abs"><svg viewBox="0 0 306 252" preserveAspectRatio="none"><defs><radialGradient id="bg8" cx="50%" cy="55%" r="75%"><stop offset="0" stop-color="#ffd018"/><stop offset="0.55" stop-color="#fec40c"/><stop offset="1" stop-color="#f9a406"/></radialGradient></defs><rect width="306" height="252" fill="url(#bg8)"/><g transform="translate(-8,-13) scale(0.2389)"><path fill="#55762e" d="M560,340 590,312 650,300 660,308 740,305 750,318 775,315 800,340 830,394 900,520 880,700 440,700 420,520 490,385 545,370z"/><path fill="#64863a" d="M560,340 590,312 650,300 700,330 640,370 590,380 545,370z"/><path fill="#486828" d="M700,330 740,305 775,315 800,340 830,394 900,520 760,500 700,400z"/></g></svg></div></div>


<div class="abs" style="left:1098px;top:119px;width:4px;height:266px;background:#606060"></div>
<div class="side-h os abs" style="top:73px">Search Options</div>
<div class="side-h os abs" style="top:119px">Asset</div>
<div class="abs" style="left:1124px;top:146px;width:208px;height:44px;background:#3a3a3a;border-radius:2px"></div>
<div class="abs" style="left:1127px;top:146px;font-size:16px;line-height:20px;color:#8c8c8c">Author name..</div>
<div class="abs" style="left:1127px;top:168px;font-size:16px;line-height:20px;color:#8c8c8c">Asset Name..</div>
<div class="side-h os abs" style="top:215px">Filters</div>
<div class="cb on abs" style="top:248px"><svg viewBox="0 0 12 12"><path d="M2 6.500L4.800 9L10 3" fill="none" stroke="#fff" stroke-width="1.700"/></svg></div><div class="cbl abs" style="top:243px">curated</div>
<div class="os abs" style="left:1132px;top:275px;font-size:16.5px;line-height:20px">Order by:</div>
<div class="abs" style="left:1128px;top:300px;width:200px;height:23px;background:#5a5a5a;border-radius:2px"></div>
<div class="abs" style="left:1131px;top:302px;font-size:16px;line-height:20px">Best</div>
<svg class="abs" style="left:1311px;top:308px" width="10" height="7" viewBox="0 0 10 7"><path d="M1.500 1.500L5 5L8.500 1.500" fill="none" stroke="#dcdcdc" stroke-width="1.400"/></svg>
<div class="side-h os abs" style="top:351px">Formats</div>
<div class="cb on abs" style="top:384px"><svg viewBox="0 0 12 12"><path d="M2 6.500L4.800 9L10 3" fill="none" stroke="#fff" stroke-width="1.700"/></svg></div><div class="cbl abs" style="top:379px">GLTF</div>
<div class="cb abs" style="top:409px"></div><div class="cbl abs" style="top:404px">OBJ</div>
<div class="cb abs" style="top:434px"></div><div class="cbl abs" style="top:429px">FBX</div>
<div class="cb abs" style="top:459px"></div><div class="cbl abs" style="top:454px">TILT</div>
<div class="side-h os abs" style="top:502px">License</div>
<div class="cb on abs" style="top:535px"><svg viewBox="0 0 12 12"><path d="M2 6.500L4.800 9L10 3" fill="none" stroke="#fff" stroke-width="1.700"/></svg></div><div class="cbl abs" style="top:530px">Remixable</div>
<div class="cb abs" style="top:560px"></div><div class="cbl abs" style="top:555px">CC0</div>
<div class="cb abs" style="top:585px"></div><div class="cbl abs" style="top:580px">CC BY</div>
<div class="cb abs" style="top:610px"></div><div class="cbl abs" style="top:605px">ALL CC</div>
<div class="abs" style="left:1120px;top:642px;width:198px;height:22px;background:#3a3a3a;border-radius:2px"></div>
<div class="abs" style="left:1123px;top:642px;font-size:16px;line-height:20px">show assets 0</div>
<svg class="abs" style="left:1323px;top:643px" width="10" height="20" viewBox="0 0 10 20"><path d="M1.500 6L5 2.500L8.500 6M1.500 13L5 16.500L8.500 13" fill="none" stroke="#8a8a8a" stroke-width="1.400"/></svg>

</body>
</html>
